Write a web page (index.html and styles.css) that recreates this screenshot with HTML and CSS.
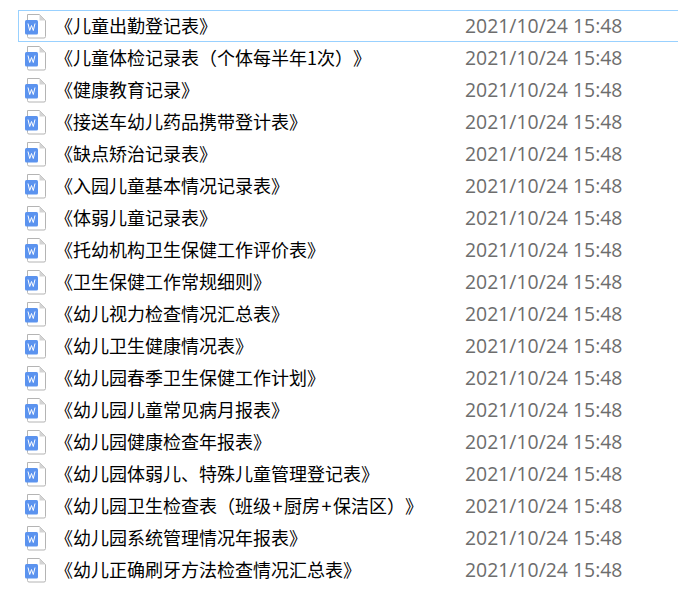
FILE: index.html
```html
<!DOCTYPE html>
<html lang="zh-CN">
<head>
    <meta charset="UTF-8">
    <title>文件列表</title>
    <link rel="stylesheet" href="styles.css">
</head>
<body>
    <svg class="defs" width="0" height="0">
        <symbol id="doc" viewBox="0 0 22 26">
            <path d="M2.5 1.5H14.5L20.5 7.5V23.5Q20.5 25 19 25H4Q2.5 25 2.5 23.5Z" fill="#fff" stroke="#b4b4b4" stroke-width="1"/>
            <path d="M14.5 1.5V7.5H20.5Z" fill="#d4d4d4"/>
            <rect x="0" y="7" width="13" height="14.5" rx="1.5" fill="#5b93ef"/>
            <path d="M3 10.5L4.7 17.5L6.5 12.5L8.3 17.5L10 10.5" fill="none" stroke="#fff" stroke-width="1"/>
        </symbol>
    </svg>
    <div class="file-list">
        <div class="file-row selected"><svg class="file-icon"><use href="#doc"/></svg><span class="file-name">《儿童出勤登记表》</span><span class="file-date">2021/10/24 15:48</span></div>
        <div class="file-row"><svg class="file-icon"><use href="#doc"/></svg><span class="file-name">《儿童体检记录表（个体每半年1次）》</span><span class="file-date">2021/10/24 15:48</span></div>
        <div class="file-row"><svg class="file-icon"><use href="#doc"/></svg><span class="file-name">《健康教育记录》</span><span class="file-date">2021/10/24 15:48</span></div>
        <div class="file-row"><svg class="file-icon"><use href="#doc"/></svg><span class="file-name">《接送车幼儿药品携带登计表》</span><span class="file-date">2021/10/24 15:48</span></div>
        <div class="file-row"><svg class="file-icon"><use href="#doc"/></svg><span class="file-name">《缺点矫治记录表》</span><span class="file-date">2021/10/24 15:48</span></div>
        <div class="file-row"><svg class="file-icon"><use href="#doc"/></svg><span class="file-name">《入园儿童基本情况记录表》</span><span class="file-date">2021/10/24 15:48</span></div>
        <div class="file-row"><svg class="file-icon"><use href="#doc"/></svg><span class="file-name">《体弱儿童记录表》</span><span class="file-date">2021/10/24 15:48</span></div>
        <div class="file-row"><svg class="file-icon"><use href="#doc"/></svg><span class="file-name">《托幼机构卫生保健工作评价表》</span><span class="file-date">2021/10/24 15:48</span></div>
        <div class="file-row"><svg class="file-icon"><use href="#doc"/></svg><span class="file-name">《卫生保健工作常规细则》</span><span class="file-date">2021/10/24 15:48</span></div>
        <div class="file-row"><svg class="file-icon"><use href="#doc"/></svg><span class="file-name">《幼儿视力检查情况汇总表》</span><span class="file-date">2021/10/24 15:48</span></div>
        <div class="file-row"><svg class="file-icon"><use href="#doc"/></svg><span class="file-name">《幼儿卫生健康情况表》</span><span class="file-date">2021/10/24 15:48</span></div>
        <div class="file-row"><svg class="file-icon"><use href="#doc"/></svg><span class="file-name">《幼儿园春季卫生保健工作计划》</span><span class="file-date">2021/10/24 15:48</span></div>
        <div class="file-row"><svg class="file-icon"><use href="#doc"/></svg><span class="file-name">《幼儿园儿童常见病月报表》</span><span class="file-date">2021/10/24 15:48</span></div>
        <div class="file-row"><svg class="file-icon"><use href="#doc"/></svg><span class="file-name">《幼儿园健康检查年报表》</span><span class="file-date">2021/10/24 15:48</span></div>
        <div class="file-row"><svg class="file-icon"><use href="#doc"/></svg><span class="file-name">《幼儿园体弱儿、特殊儿童管理登记表》</span><span class="file-date">2021/10/24 15:48</span></div>
        <div class="file-row"><svg class="file-icon"><use href="#doc"/></svg><span class="file-name">《幼儿园卫生检查表（班级<span class="plus">+</span>厨房<span class="plus">+</span>保洁区）》</span><span class="file-date">2021/10/24 15:48</span></div>
        <div class="file-row"><svg class="file-icon"><use href="#doc"/></svg><span class="file-name">《幼儿园系统管理情况年报表》</span><span class="file-date">2021/10/24 15:48</span></div>
        <div class="file-row"><svg class="file-icon"><use href="#doc"/></svg><span class="file-name">《幼儿正确刷牙方法检查情况汇总表》</span><span class="file-date">2021/10/24 15:48</span></div>
    </div>
</body>
</html>
```

FILE: styles.css
```css
html, body {
    height: 100%;
}

body {
    margin: 0;
    background-color: #fff;
    overflow: hidden;
    font-family: "Noto Sans CJK SC", sans-serif;
}

.defs {
    display: block;
}

.file-list {
    padding-top: 10px;
    padding-left: 18px;
}

.file-row {
    display: flex;
    align-items: center;
    height: 32px;
    box-sizing: border-box;
    border: 1px solid transparent;
    border-right: none;
}

.file-row.selected {
    border-color: #99d1ff;
}

.file-icon {
    width: 22px;
    height: 26px;
    margin-left: 6px;
    flex: none;
}

.file-name {
    width: 410px;
    margin-left: 8px;
    padding-bottom: 2px;
    flex: none;
    font-size: 18px;
    line-height: 28px;
    color: #000;
    white-space: nowrap;
    text-spacing-trim: space-all;
}

.plus {
    margin: 0 1.5px;
}

.file-date {
    font-family: "Open Sans", sans-serif;
    font-size: 19.4px;
    line-height: 28px;
    color: #6d6d6d;
    white-space: nowrap;
}
```
